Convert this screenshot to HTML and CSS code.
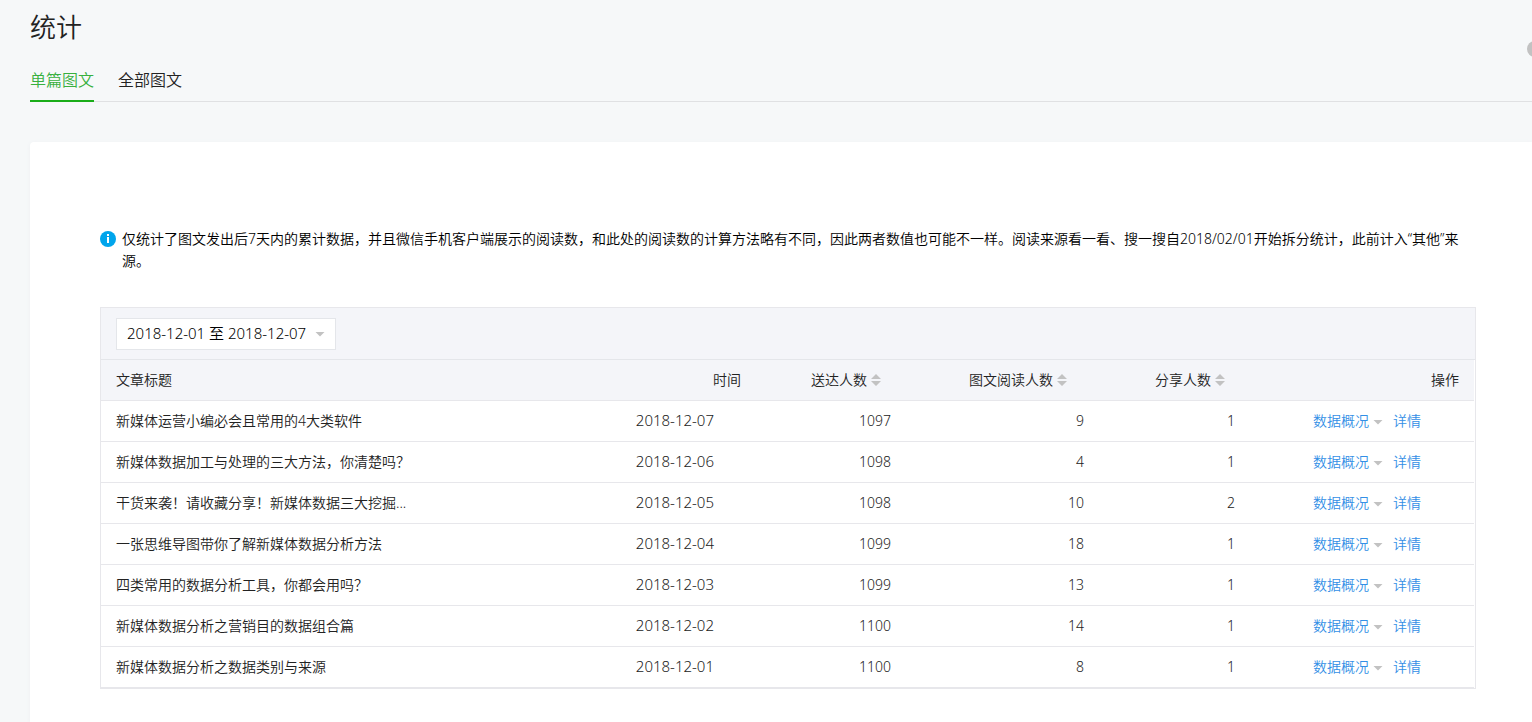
FILE: index.html
```html
<!DOCTYPE html>
<html lang="zh-CN">
<head>
<meta charset="utf-8">
<title>统计</title>
<link rel="stylesheet" href="styles.css">
</head>
<body>
<header class="page-header">
  <h1 class="page-title">统计</h1>
  <nav class="tabs">
    <a class="tab tab-active" href="#single">单篇图文</a>
    <a class="tab" href="#all">全部图文</a>
  </nav>
  <span class="help-dot"></span>
</header>
<main class="card">
  <div class="notice">
    <svg class="notice-icon" viewBox="0 0 16 16" aria-hidden="true"><circle cx="8" cy="8" r="8" fill="#00a5ec"/><path d="M7 3h2v2H7zM7 6h2v6H7z" fill="#fff"/></svg>
    <p class="notice-text">仅统计了图文发出后7天内的累计数据，并且微信手机客户端展示的阅读数，和此处的阅读数的计算方法略有不同，因此两者数值也可能不一样。阅读来源看一看、搜一搜自2018/02/01开始拆分统计，此前计入“其他”来源。</p>
  </div>
  <section class="panel">
    <div class="filter">
      <button class="date-range" type="button"><span class="date-text">2018-12-01 至 2018-12-07</span><i class="caret"></i></button>
    </div>
    <table class="data">
      <thead>
        <tr>
          <th class="title">文章标题</th>
          <th class="time">时间</th>
          <th class="sent"><button class="sort" type="button">送达人数<svg class="sort-icon" viewBox="0 0 10 12"><path d="M5 0l5 5H0zM0 7h10l-5 5z"/></svg></button></th>
          <th class="read"><button class="sort" type="button">图文阅读人数<svg class="sort-icon" viewBox="0 0 10 12"><path d="M5 0l5 5H0zM0 7h10l-5 5z"/></svg></button></th>
          <th class="share"><button class="sort" type="button">分享人数<svg class="sort-icon" viewBox="0 0 10 12"><path d="M5 0l5 5H0zM0 7h10l-5 5z"/></svg></button></th>
          <th class="ops">操作</th>
        </tr>
      </thead>
      <tbody>
        <tr><td class="title">新媒体运营小编必会且常用的4大类软件</td><td class="time">2018-12-07</td><td>1097</td><td>9</td><td>1</td><td class="ops"><div class="links"><a href="#o">数据概况<i class="caret"></i></a><a href="#d">详情</a></div></td></tr>
        <tr><td class="title">新媒体数据加工与处理的三大方法，你清楚吗？</td><td class="time">2018-12-06</td><td>1098</td><td>4</td><td>1</td><td class="ops"><div class="links"><a href="#o">数据概况<i class="caret"></i></a><a href="#d">详情</a></div></td></tr>
        <tr><td class="title">干货来袭！请收藏分享！新媒体数据三大挖掘...</td><td class="time">2018-12-05</td><td>1098</td><td>10</td><td>2</td><td class="ops"><div class="links"><a href="#o">数据概况<i class="caret"></i></a><a href="#d">详情</a></div></td></tr>
        <tr><td class="title">一张思维导图带你了解新媒体数据分析方法</td><td class="time">2018-12-04</td><td>1099</td><td>18</td><td>1</td><td class="ops"><div class="links"><a href="#o">数据概况<i class="caret"></i></a><a href="#d">详情</a></div></td></tr>
        <tr><td class="title">四类常用的数据分析工具，你都会用吗？</td><td class="time">2018-12-03</td><td>1099</td><td>13</td><td>1</td><td class="ops"><div class="links"><a href="#o">数据概况<i class="caret"></i></a><a href="#d">详情</a></div></td></tr>
        <tr><td class="title">新媒体数据分析之营销目的数据组合篇</td><td class="time">2018-12-02</td><td>1100</td><td>14</td><td>1</td><td class="ops"><div class="links"><a href="#o">数据概况<i class="caret"></i></a><a href="#d">详情</a></div></td></tr>
        <tr><td class="title">新媒体数据分析之数据类别与来源</td><td class="time">2018-12-01</td><td>1100</td><td>8</td><td>1</td><td class="ops"><div class="links"><a href="#o">数据概况<i class="caret"></i></a><a href="#d">详情</a></div></td></tr>
      </tbody>
    </table>
  </section>
</main>
</body>
</html>
```
FILE: styles.css
```css
* {
  box-sizing: border-box;
}

body {
  margin: 0;
  min-height: 100vh;
  display: flex;
  flex-direction: column;
  padding-left: 30px;
  background: #f6f8f9;
  color: #222;
  font: 350 14px/22px "Noto Sans", "Noto Sans CJK SC", sans-serif;
}

a {
  color: inherit;
  text-decoration: none;
}

button {
  font: inherit;
  color: inherit;
  cursor: pointer;
}

.page-header {
  position: relative;
  overflow: hidden;
}

.page-title {
  margin: 0;
  padding: 7px 0 13px;
  font-size: 26px;
  line-height: 40px;
  font-weight: 350;
}

.tabs {
  display: flex;
  gap: 24px;
  height: 42px;
  border-bottom: 1px solid #e0e1e3;
}

.tab {
  height: 42px;
  font-size: 16px;
  line-height: 40px;
}

.tab-active {
  color: #38b03e;
  border-bottom: 2px solid #1aad19;
}

.help-dot {
  position: absolute;
  top: 41px;
  right: -11px;
  width: 16px;
  height: 16px;
  border-radius: 50%;
  background: #c2c2c2;
}

.card {
  flex: 1;
  margin-top: 40px;
  padding: 86px 56px 33px 70px;
  background: #fff;
  border-radius: 4px 0 0 0;
  box-shadow: 0 1px 4px #edeff2;
}

.notice {
  display: flex;
  gap: 6px;
  align-items: flex-start;
  margin-bottom: 35px;
}

.notice-icon {
  flex: none;
  width: 16px;
  margin-top: 3px;
}

.notice-text {
  margin: 0;
  color: #000;
}

.panel {
  border: 1px solid #e7e7eb;
}

.filter {
  padding: 10px 15px 9px;
  background: #f4f5f9;
  border-bottom: 1px solid #e4e6ea;
}

.date-range {
  display: flex;
  align-items: center;
  justify-content: space-between;
  width: 220px;
  height: 32px;
  padding: 0 10px;
  border: 1px solid #e4e6ea;
  background: #fff;
  color: #000;
  font-size: 15px;
}

.date-text {
  padding-bottom: 2px;
}

.caret {
  flex: none;
  width: 10px;
  height: 5px;
  background: #c2c2c2;
  clip-path: polygon(0 0, 100% 0, 50% 100%);
}

.data {
  width: calc(100% - 1px);
  table-layout: fixed;
  border-collapse: separate;
  border-spacing: 0;
}

.data th,
.data td {
  height: 41px;
  padding: 0 15px;
  border-bottom: 1px solid #e7e7eb;
  text-align: right;
  font-weight: 350;
  white-space: nowrap;
}

.data th {
  background: #f4f5f9;
}

.data .title {
  text-align: left;
}

.data .time {
  width: 150px;
}

.data td.time {
  padding: 0 42px 2px 0;
  font-size: 15px;
}

.data .sent {
  width: 150px;
  padding-right: 25px;
}

.data .read {
  width: 193px;
  padding-right: 32px;
}

.data .share {
  width: 151px;
  padding-right: 25px;
}

.data .ops {
  width: 224px;
}

.data td.ops {
  padding-left: 63px;
}

.sort {
  display: inline-flex;
  align-items: center;
  gap: 4px;
  padding: 0;
  border: 0;
  background: none;
}

.sort-icon {
  width: 10px;
  height: 12px;
  fill: #c2c2c2;
}

.links {
  display: flex;
  gap: 10px;
  color: #338fe6;
}

.links a {
  display: flex;
  align-items: center;
  gap: 4px;
}

.links .caret {
  margin-top: 2px;
}
```
